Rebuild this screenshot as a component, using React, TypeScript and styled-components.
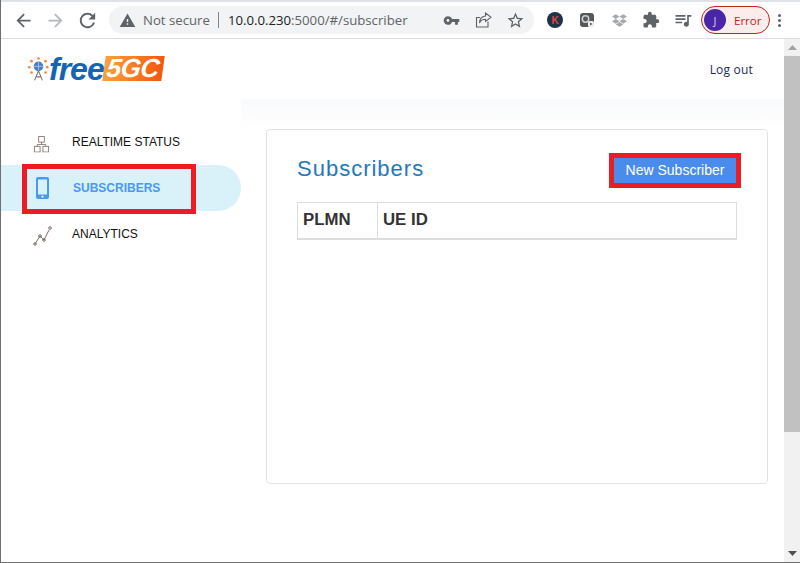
import React from 'react';
import styled, { createGlobalStyle } from 'styled-components';
import { FaDropbox } from 'react-icons/fa';
import {
  MdArrowBack,
  MdArrowForward,
  MdExtension,
  MdQueueMusic,
  MdRefresh,
  MdStarBorder,
  MdVpnKey,
  MdWarning,
} from 'react-icons/md';

const GlobalStyle = createGlobalStyle`
  html, body {
    margin: 0;
    padding: 0;
    height: 100%;
    overflow: hidden;
    background: #fff;
  }
  * {
    box-sizing: border-box;
  }
`;

const Window = styled.div`
  width: 800px;
  height: 563px;
  display: flex;
  flex-direction: column;
  border-left: 1px solid #6f6f6f;
  border-bottom: 1px solid #6f6f6f;
  font-family: "Liberation Sans", Arial, sans-serif;
  overflow: hidden;
`;

const TabStrip = styled.div`
  height: 2px;
  flex: none;
  background: #dee1e6;
`;

const Toolbar = styled.div`
  height: 37px;
  flex: none;
  display: flex;
  align-items: center;
  padding-left: 6px;
  background: #fff;
  border-bottom: 1px solid #dcdcdc;
`;

const NavButton = styled.div`
  width: 32px;
  height: 32px;
  flex: none;
  display: flex;
  align-items: center;
  justify-content: center;
`;

const Omnibox = styled.div`
  width: 425px;
  height: 28px;
  margin-left: 6px;
  flex: none;
  display: flex;
  align-items: center;
  padding-left: 10px;
  border-radius: 14px;
  background: #f1f3f4;
  font-family: "Open Sans", sans-serif;
  font-size: 13.2px;
`;

const SecurityLabel = styled.span`
  margin-left: 7px;
  color: #5f6368;
`;

const Divider = styled.span`
  width: 1px;
  height: 16px;
  margin: 0 9px 0 8px;
  background: #80868b;
`;

const Host = styled.span`
  color: #202124;
`;

const UrlPath = styled.span`
  color: #5f6368;
`;

const OmniActions = styled.div`
  margin-left: auto;
  display: flex;
  align-items: center;
  padding-right: 3px;
`;

const IconSlot = styled.span`
  width: 32px;
  height: 28px;
  flex: none;
  display: flex;
  align-items: center;
  justify-content: center;
`;

const Extensions = styled.div`
  display: flex;
  align-items: center;
  margin-left: 5px;
`;

const KBadge = styled.span`
  width: 16px;
  height: 16px;
  border-radius: 50%;
  background: #1f3347;
  color: #e0483e;
  font-size: 10px;
  font-weight: 700;
  display: flex;
  align-items: center;
  justify-content: center;
`;

const ProfileChip = styled.div`
  width: 69px;
  height: 28px;
  margin-left: 2px;
  flex: none;
  display: flex;
  align-items: center;
  padding-left: 2px;
  border: 1px solid #c5221f;
  border-radius: 14px;
  background: #fcecea;
  color: #c5221f;
  font-family: "Open Sans", sans-serif;
  font-size: 11.5px;
`;

const Avatar = styled.span`
  width: 22px;
  height: 22px;
  margin-right: 8px;
  border-radius: 50%;
  background: #4a26a6;
  color: #d8c8f5;
  font-size: 11px;
  display: flex;
  align-items: center;
  justify-content: center;
`;

const MenuDots = styled.div`
  width: 18px;
  display: flex;
  flex-direction: column;
  align-items: center;
  gap: 2px;

  span {
    width: 3px;
    height: 3px;
    border-radius: 50%;
    background: #5f6368;
  }
`;

const Viewport = styled.div`
  flex: 1;
  min-height: 0;
  display: flex;
`;

const Page = styled.div`
  flex: 1;
  min-width: 0;
  display: flex;
  flex-direction: column;
`;

const Header = styled.header`
  height: 60px;
  flex: none;
  display: flex;
  align-items: center;
  justify-content: space-between;
  padding: 0 31px 0 27px;
`;

const Logo = styled.div`
  display: flex;
  align-items: center;
  margin-bottom: 1px;
`;

const LogoFree = styled.span`
  color: #1565b5;
  font-size: 32px;
  font-style: italic;
  font-weight: 700;
  letter-spacing: -1px;
  line-height: 28px;
`;

const LogoFive = styled.span`
  padding: 0 4px 0 3px;
  background: linear-gradient(to right, #f9a23a, #f4570f);
  color: #fff;
  font-size: 26px;
  font-style: italic;
  font-weight: 700;
  letter-spacing: -0.5px;
  line-height: 25px;
  transform: skewX(-8deg);
`;

const LogOut = styled.a`
  color: #1d2b57;
  font-family: "Open Sans", sans-serif;
  font-size: 12px;
  letter-spacing: 0.2px;
`;

const Body = styled.div`
  flex: 1;
  min-height: 0;
  display: flex;
  position: relative;
`;

const HeaderFade = styled.div`
  position: absolute;
  top: 0;
  left: 240px;
  right: 0;
  height: 32px;
  background: linear-gradient(to bottom, #f9fafb, #fff);
`;

const Sidebar = styled.nav`
  width: 240px;
  flex: none;
  padding-top: 20px;
  display: flex;
  flex-direction: column;
`;

const NavItem = styled.div<{ $active?: boolean }>`
  height: 46px;
  position: relative;
  display: flex;
  align-items: center;
  padding-left: ${p => (p.$active ? 72 : 71)}px;
  border-radius: 0 23px 23px 0;
  background: ${p => (p.$active ? '#d9f1f9' : 'transparent')};
  color: ${p => (p.$active ? '#4a99f2' : '#111')};
  font-size: 12px;
  font-weight: ${p => (p.$active ? 700 : 400)};
`;

const NavIcon = styled.span<{ $active?: boolean }>`
  position: absolute;
  left: ${p => (p.$active ? 35 : 32)}px;
  top: 50%;
  margin-top: ${p => (p.$active ? 0 : 2)}px;
  transform: translateY(-50%);
  display: flex;
`;

const NavCallout = styled.span`
  position: absolute;
  left: 21px;
  top: -1px;
  width: 174px;
  height: 50px;
  border: 5px solid #ed1c24;
  pointer-events: none;
`;

const Main = styled.main`
  flex: 1;
  min-width: 0;
  position: relative;
  padding: 30px 16px 0 25px;
`;

const Card = styled.section`
  height: 355px;
  padding: 15px 30px 0;
  border: 1px solid #e3e3e3;
  border-radius: 4px;
  background: #fff;
`;

const CardHead = styled.div`
  height: 50px;
  display: flex;
  align-items: center;
  justify-content: space-between;
`;

const Title = styled.h2`
  margin: 0 0 2px;
  color: #2478ba;
  font-size: 22px;
  font-weight: 400;
  letter-spacing: 1px;
`;

const NewButton = styled.button`
  width: 122px;
  height: 25px;
  padding: 0;
  margin-right: 1px;
  border: none;
  outline: 5px solid #ed1c24;
  background: #4a8cec;
  color: #fff;
  font-family: "Liberation Sans", sans-serif;
  font-size: 14px;
`;

const Table = styled.table`
  width: 440px;
  margin-top: 7px;
  border-collapse: collapse;
  table-layout: fixed;
`;

const HeadCell = styled.th<{ $w?: number }>`
  width: ${p => (p.$w ? `${p.$w}px` : 'auto')};
  height: 36px;
  padding: 0 5px;
  border: 1px solid #ddd;
  border-bottom-width: 2px;
  color: #333;
  font-size: 16.8px;
  font-weight: 700;
  text-align: left;
`;

const Scrollbar = styled.div`
  width: 16px;
  flex: none;
  display: flex;
  flex-direction: column;
  background: #f1f1f1;
`;

const ScrollButton = styled.div`
  height: 17px;
  flex: none;
  display: flex;
  align-items: center;
  justify-content: center;
`;

const ScrollTrack = styled.div`
  flex: 1;
  min-height: 0;
`;

const ScrollThumb = styled.div`
  height: 376px;
  background: #c1c1c1;
`;

const grey = '#5f6368';

const App: React.FC = () => {
  return (
    <>
      <GlobalStyle />
      <Window>
        <TabStrip />
        <Toolbar>
          <NavButton>
            <MdArrowBack size={21} color={grey} />
          </NavButton>
          <NavButton>
            <MdArrowForward size={21} color="#b4b7bb" />
          </NavButton>
          <NavButton>
            <MdRefresh size={23} color={grey} />
          </NavButton>
          <Omnibox>
            <MdWarning size={17} color={grey} />
            <SecurityLabel>Not secure</SecurityLabel>
            <Divider />
            <Host>10.0.0.230</Host>
            <UrlPath>:5000/#/subscriber</UrlPath>
            <OmniActions>
              <IconSlot>
                <MdVpnKey size={17} color={grey} />
              </IconSlot>
              <IconSlot>
                <svg width="17" height="16" viewBox="0 0 17 16" fill="none" stroke={grey} strokeWidth="1.1">
                  <path d="M13 9.500V15H1.500V5.500H5" />
                  <path d="M10.500 1l5.500 4.300-5.500 4.200V7.200C7.500 7.200 5.500 8.500 4.500 11c0-4 2-6.500 6-7z" />
                </svg>
              </IconSlot>
              <IconSlot>
                <MdStarBorder size={19} color={grey} />
              </IconSlot>
            </OmniActions>
          </Omnibox>
          <Extensions>
            <IconSlot>
              <KBadge>K</KBadge>
            </IconSlot>
            <IconSlot>
              <svg width="16" height="16" viewBox="0 0 16 16">
                <rect x="1" y="1" width="14" height="14" rx="3" fill="#55585a" />
                <circle cx="6.500" cy="7" r="3.200" fill="none" stroke="#cfcfcf" strokeWidth="1.500" />
                <rect x="9" y="9" width="6" height="6" rx="1.500" fill="#eee" />
                <path d="M11 10.500v3l2.500-1.500z" fill="#55585a" />
              </svg>
            </IconSlot>
            <IconSlot>
              <FaDropbox size={15} color="#a6a8aa" />
            </IconSlot>
            <IconSlot>
              <MdExtension size={18} color={grey} />
            </IconSlot>
            <IconSlot>
              <MdQueueMusic size={20} color={grey} />
            </IconSlot>
          </Extensions>
          <ProfileChip>
            <Avatar>J</Avatar>
            Error
          </ProfileChip>
          <MenuDots>
            <span />
            <span />
            <span />
          </MenuDots>
        </Toolbar>
        <Viewport>
          <Page>
            <Header>
              <Logo>
                <svg width="21" height="28" viewBox="0 0 24 28">
                  <g fill="#ef8a3a">
                    <circle cx="12" cy="2" r="1.500" />
                    <circle cx="4" cy="5" r="1.500" />
                    <circle cx="20" cy="5" r="1.500" />
                    <circle cx="1.500" cy="12" r="1.500" />
                    <circle cx="22" cy="12" r="1.500" />
                    <circle cx="4" cy="18" r="1.500" />
                    <circle cx="20" cy="18" r="1.500" />
                  </g>
                  <circle cx="12" cy="11" r="5.500" fill="#4a7fc0" />
                  <path d="M6.500 11h11M12 5.500v11" stroke="#cfe0f2" strokeWidth="0.700" />
                  <path d="M12 16 7.500 27M12 16l4.500 11M9 23h6" stroke="#777" strokeWidth="1.200" fill="none" />
                </svg>
                <LogoFree>free</LogoFree>
                <LogoFive>5GC</LogoFive>
              </Logo>
              <LogOut>Log out</LogOut>
            </Header>
            <Body>
              <HeaderFade />
              <Sidebar>
                <NavItem>
                  <NavIcon>
                    <svg width="17" height="17" viewBox="0 0 18 18" fill="none" stroke="#8a7f7a">
                      <rect x="6" y="1" width="6" height="6" />
                      <rect x="1.500" y="11.500" width="6" height="6" />
                      <rect x="10.500" y="11.500" width="6" height="6" />
                      <path d="M9 7v2.500M4.500 11.500v-2h9v2" />
                    </svg>
                  </NavIcon>
                  REALTIME STATUS
                </NavItem>
                <NavItem $active>
                  <NavIcon $active>
                    <svg width="13" height="22" viewBox="0 0 13 22">
                      <rect x="0" y="0" width="13" height="22" rx="2" fill="#4a99f2" />
                      <rect x="2" y="2.500" width="9" height="15" fill="#d9f1f9" />
                      <circle cx="6.500" cy="19.600" r="1.200" fill="#d9f1f9" />
                    </svg>
                  </NavIcon>
                  SUBSCRIBERS
                  <NavCallout />
                </NavItem>
                <NavItem>
                  <NavIcon>
                    <svg width="20" height="20" viewBox="0 0 20 20" fill="none" stroke="#7a6f6a">
                      <path d="M2 18 7 10l4 4 5-10" />
                      <circle cx="2" cy="18" r="1.300" />
                      <circle cx="7" cy="10" r="1.300" />
                      <circle cx="11" cy="14" r="1.300" />
                      <circle cx="17" cy="2" r="1.300" />
                    </svg>
                  </NavIcon>
                  ANALYTICS
                </NavItem>
              </Sidebar>
              <Main>
                <Card>
                  <CardHead>
                    <Title>Subscribers</Title>
                    <NewButton>New Subscriber</NewButton>
                  </CardHead>
                  <Table>
                    <thead>
                      <tr>
                        <HeadCell $w={80}>PLMN</HeadCell>
                        <HeadCell>UE ID</HeadCell>
                      </tr>
                    </thead>
                  </Table>
                </Card>
              </Main>
            </Body>
          </Page>
          <Scrollbar>
            <ScrollButton>
              <svg width="9" height="5" viewBox="0 0 9 5">
                <path d="M4.500 0 9 5H0z" fill="#a3a3a3" />
              </svg>
            </ScrollButton>
            <ScrollThumb />
            <ScrollTrack />
            <ScrollButton>
              <svg width="9" height="5" viewBox="0 0 9 5">
                <path d="M0 0h9L4.500 5z" fill="#505050" />
              </svg>
            </ScrollButton>
          </Scrollbar>
        </Viewport>
      </Window>
    </>
  );
};

export default App;
